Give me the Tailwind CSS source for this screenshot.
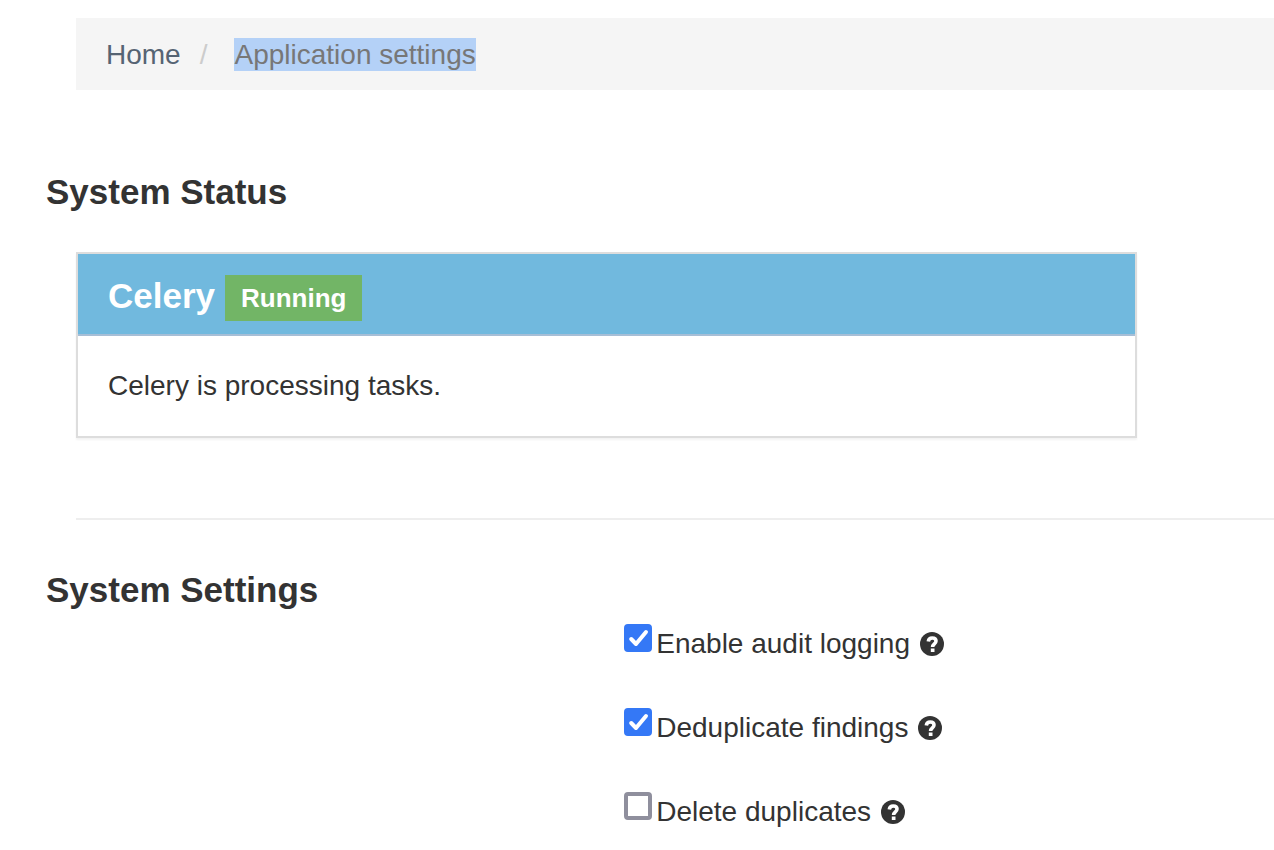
<!DOCTYPE html>
<html lang="en">
<head>
<meta charset="utf-8">
<meta name="viewport" content="width=device-width, initial-scale=1">
<title>Application settings</title>
<script src="https://cdn.jsdelivr.net/npm/@tailwindcss/browser@4"></script>
</head>
<body class="bg-white font-['Liberation_Sans',Arial,sans-serif] text-[28px] leading-10 text-[#333333]">
<svg class="hidden" aria-hidden="true">
  <symbol id="question" viewBox="0 0 24 24"><circle cx="12" cy="12" r="12" fill="currentColor"/><path d="M8.300 9.500C8.600 7.200 10 6 12.200 6c2.300 0 3.800 1.200 3.800 3.100 0 2.900-3.400 2.700-3.400 6" fill="none" stroke="#fff" stroke-width="3.600"/><path d="M10.800 16.500h3.700v3.500h-3.700z" fill="#fff"/></symbol>
  <symbol id="check" viewBox="0 0 28 28"><path d="M7.200 15l4.800 5L22 8" fill="none" stroke="currentColor" stroke-width="4" stroke-linecap="round" stroke-linejoin="round"/></symbol>
</svg>
<main class="pt-[18px]">
  <nav aria-label="Breadcrumb" class="ml-[76px] bg-[#f5f5f5] px-[30px] pt-[17px] pb-[15px]">
    <ol class="flex">
      <li><a href="#" class="text-[#566473]">Home</a></li>
      <li aria-hidden="true" class="pr-[27px] pl-[19px] text-[#cccccc]">/</li>
      <li aria-current="page" class="text-[#777777]"><span class="bg-[#b4d1f7] py-px">Application settings</span></li>
    </ol>
  </nav>

  <h2 class="mt-20 ml-[46px] text-[35px] leading-11 font-bold">System Status</h2>
  <section class="mt-[38px] mr-[137px] ml-[76px] border-2 border-[#dddddd] shadow-[0_2px_2px_rgba(0,0,0,0.05)]">
    <header class="flex h-[82px] items-center gap-[10px] border-b-2 border-[#a6bed6] bg-[#71b9de] px-[30px] pt-1 text-white">
      <h3 class="text-[35px] leading-11 font-bold">Celery</h3>
      <span class="mt-1 bg-[#72b566] px-4 py-[3px] text-[26px] leading-10 font-bold">Running</span>
    </header>
    <p class="px-[30px] py-[30px]">Celery is processing tasks.</p>
  </section>

  <hr class="mt-20 ml-[76px] border-t-2 border-[#eeeeee]">

  <h2 class="mt-12 ml-[46px] text-[35px] leading-11 font-bold">System Settings</h2>
  <form class="mt-3 ml-[49%] flex flex-col gap-11">
    <div class="flex gap-1">
      <span class="grid h-7 w-7"><input id="audit" type="checkbox" checked class="peer col-start-1 row-start-1 h-7 w-7 appearance-none rounded border-4 border-[#8f8f9d] checked:border-[#3478f6] checked:bg-[#3478f6]"><svg class="pointer-events-none invisible col-start-1 row-start-1 h-7 w-7 text-white peer-checked:visible" aria-hidden="true"><use href="#check"/></svg></span>
      <label for="audit" class="flex items-center gap-[10px]">Enable audit logging <svg class="h-6 w-6" aria-hidden="true"><use href="#question"/></svg></label>
    </div>
    <div class="flex gap-1">
      <span class="grid h-7 w-7"><input id="dedupe" type="checkbox" checked class="peer col-start-1 row-start-1 h-7 w-7 appearance-none rounded border-4 border-[#8f8f9d] checked:border-[#3478f6] checked:bg-[#3478f6]"><svg class="pointer-events-none invisible col-start-1 row-start-1 h-7 w-7 text-white peer-checked:visible" aria-hidden="true"><use href="#check"/></svg></span>
      <label for="dedupe" class="flex items-center gap-[10px]">Deduplicate findings <svg class="h-6 w-6" aria-hidden="true"><use href="#question"/></svg></label>
    </div>
    <div class="flex gap-1">
      <span class="grid h-7 w-7"><input id="delete" type="checkbox" class="peer col-start-1 row-start-1 h-7 w-7 appearance-none rounded border-4 border-[#8f8f9d] checked:border-[#3478f6] checked:bg-[#3478f6]"><svg class="pointer-events-none invisible col-start-1 row-start-1 h-7 w-7 text-white peer-checked:visible" aria-hidden="true"><use href="#check"/></svg></span>
      <label for="delete" class="flex items-center gap-[10px]">Delete duplicates <svg class="h-6 w-6" aria-hidden="true"><use href="#question"/></svg></label>
    </div>
  </form>
</main>
</body>
</html>
